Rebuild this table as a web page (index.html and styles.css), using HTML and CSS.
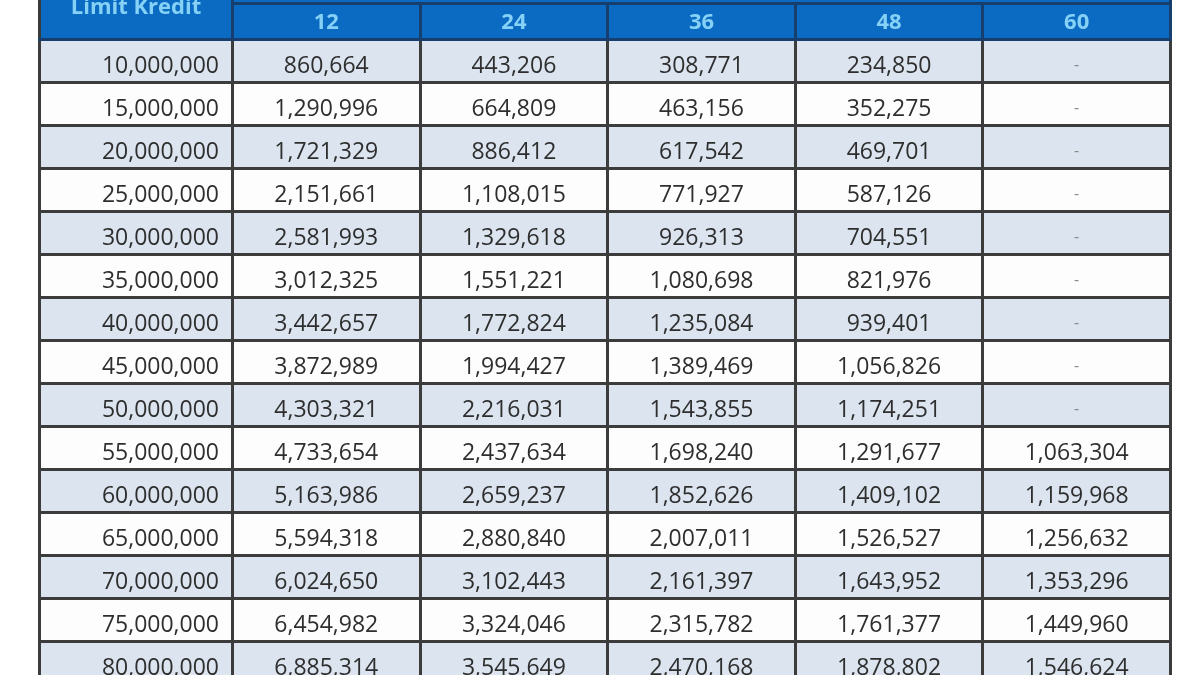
FILE: index.html
```html
<!DOCTYPE html>
<html lang="id">
<head>
<meta charset="utf-8">
<title>Tabel Angsuran</title>
<link rel="stylesheet" href="styles.css">
</head>
<body>
<div class="sheet">
<table class="loan">
  <colgroup>
    <col class="c-limit">
    <col class="c-term"><col class="c-term"><col class="c-term"><col class="c-term"><col class="c-term">
  </colgroup>
  <thead>
    <tr class="h1">
      <th rowspan="2" class="limit-head">Limit Kredit</th>
      <th colspan="5">Jangka Waktu (Bulan)</th>
    </tr>
    <tr class="h2">
      <th>12</th><th>24</th><th>36</th><th>48</th><th>60</th>
    </tr>
  </thead>
  <tbody>
    <tr><td>10,000,000</td><td>860,664</td><td>443,206</td><td>308,771</td><td>234,850</td><td class="dash">-</td></tr>
    <tr><td>15,000,000</td><td>1,290,996</td><td>664,809</td><td>463,156</td><td>352,275</td><td class="dash">-</td></tr>
    <tr><td>20,000,000</td><td>1,721,329</td><td>886,412</td><td>617,542</td><td>469,701</td><td class="dash">-</td></tr>
    <tr><td>25,000,000</td><td>2,151,661</td><td>1,108,015</td><td>771,927</td><td>587,126</td><td class="dash">-</td></tr>
    <tr><td>30,000,000</td><td>2,581,993</td><td>1,329,618</td><td>926,313</td><td>704,551</td><td class="dash">-</td></tr>
    <tr><td>35,000,000</td><td>3,012,325</td><td>1,551,221</td><td>1,080,698</td><td>821,976</td><td class="dash">-</td></tr>
    <tr><td>40,000,000</td><td>3,442,657</td><td>1,772,824</td><td>1,235,084</td><td>939,401</td><td class="dash">-</td></tr>
    <tr><td>45,000,000</td><td>3,872,989</td><td>1,994,427</td><td>1,389,469</td><td>1,056,826</td><td class="dash">-</td></tr>
    <tr><td>50,000,000</td><td>4,303,321</td><td>2,216,031</td><td>1,543,855</td><td>1,174,251</td><td class="dash">-</td></tr>
    <tr><td>55,000,000</td><td>4,733,654</td><td>2,437,634</td><td>1,698,240</td><td>1,291,677</td><td>1,063,304</td></tr>
    <tr><td>60,000,000</td><td>5,163,986</td><td>2,659,237</td><td>1,852,626</td><td>1,409,102</td><td>1,159,968</td></tr>
    <tr><td>65,000,000</td><td>5,594,318</td><td>2,880,840</td><td>2,007,011</td><td>1,526,527</td><td>1,256,632</td></tr>
    <tr><td>70,000,000</td><td>6,024,650</td><td>3,102,443</td><td>2,161,397</td><td>1,643,952</td><td>1,353,296</td></tr>
    <tr><td>75,000,000</td><td>6,454,982</td><td>3,324,046</td><td>2,315,782</td><td>1,761,377</td><td>1,449,960</td></tr>
    <tr><td>80,000,000</td><td>6,885,314</td><td>3,545,649</td><td>2,470,168</td><td>1,878,802</td><td>1,546,624</td></tr>
  </tbody>
</table>
</div>
</body>
</html>
```

FILE: styles.css
```css
html, body {
  margin: 0;
  padding: 0;
  background: #ffffff;
  overflow: hidden;
}

.sheet {
  width: 1200px;
  height: 675px;
  overflow: hidden;
}

.loan {
  margin: -38px 0 0 38px;
  width: 1131px;
  border-collapse: collapse;
  table-layout: fixed;
  font-family: "Open Sans", "Liberation Sans", sans-serif;
  font-size: 23px;
  color: #2e2e2e;
  filter: blur(0.45px);
}

.c-limit { width: 193px; }
.c-term { width: 187.6px; }

.loan th {
  background: #0b6bc2;
  color: #86d2f6;
  font-weight: 700;
  font-size: 22px;
  text-align: center;
  border: 3px solid #173f6e;
  padding: 0;
  line-height: 1;
}

.loan .h1 th { height: 37px; }
.loan .h2 th { height: 29px; padding-bottom: 4px; }

.loan .limit-head {
  border-left-color: #3a3a3a;
  padding-top: 6px;
}

.loan td {
  height: 34px;
  padding: 6px 0 0;
  text-align: center;
  border: 3px solid #3c3c3c;
  line-height: 1;
}

.loan td:first-child {
  text-align: right;
  padding-right: 12px;
}

.loan tbody tr:nth-child(odd) td {
  background: #dbe4ef;
}

.loan tbody tr:nth-child(even) td {
  background: #fdfdfd;
}

.loan td.dash {
  color: #8a8a8a;
  font-size: 16px;
}
```
